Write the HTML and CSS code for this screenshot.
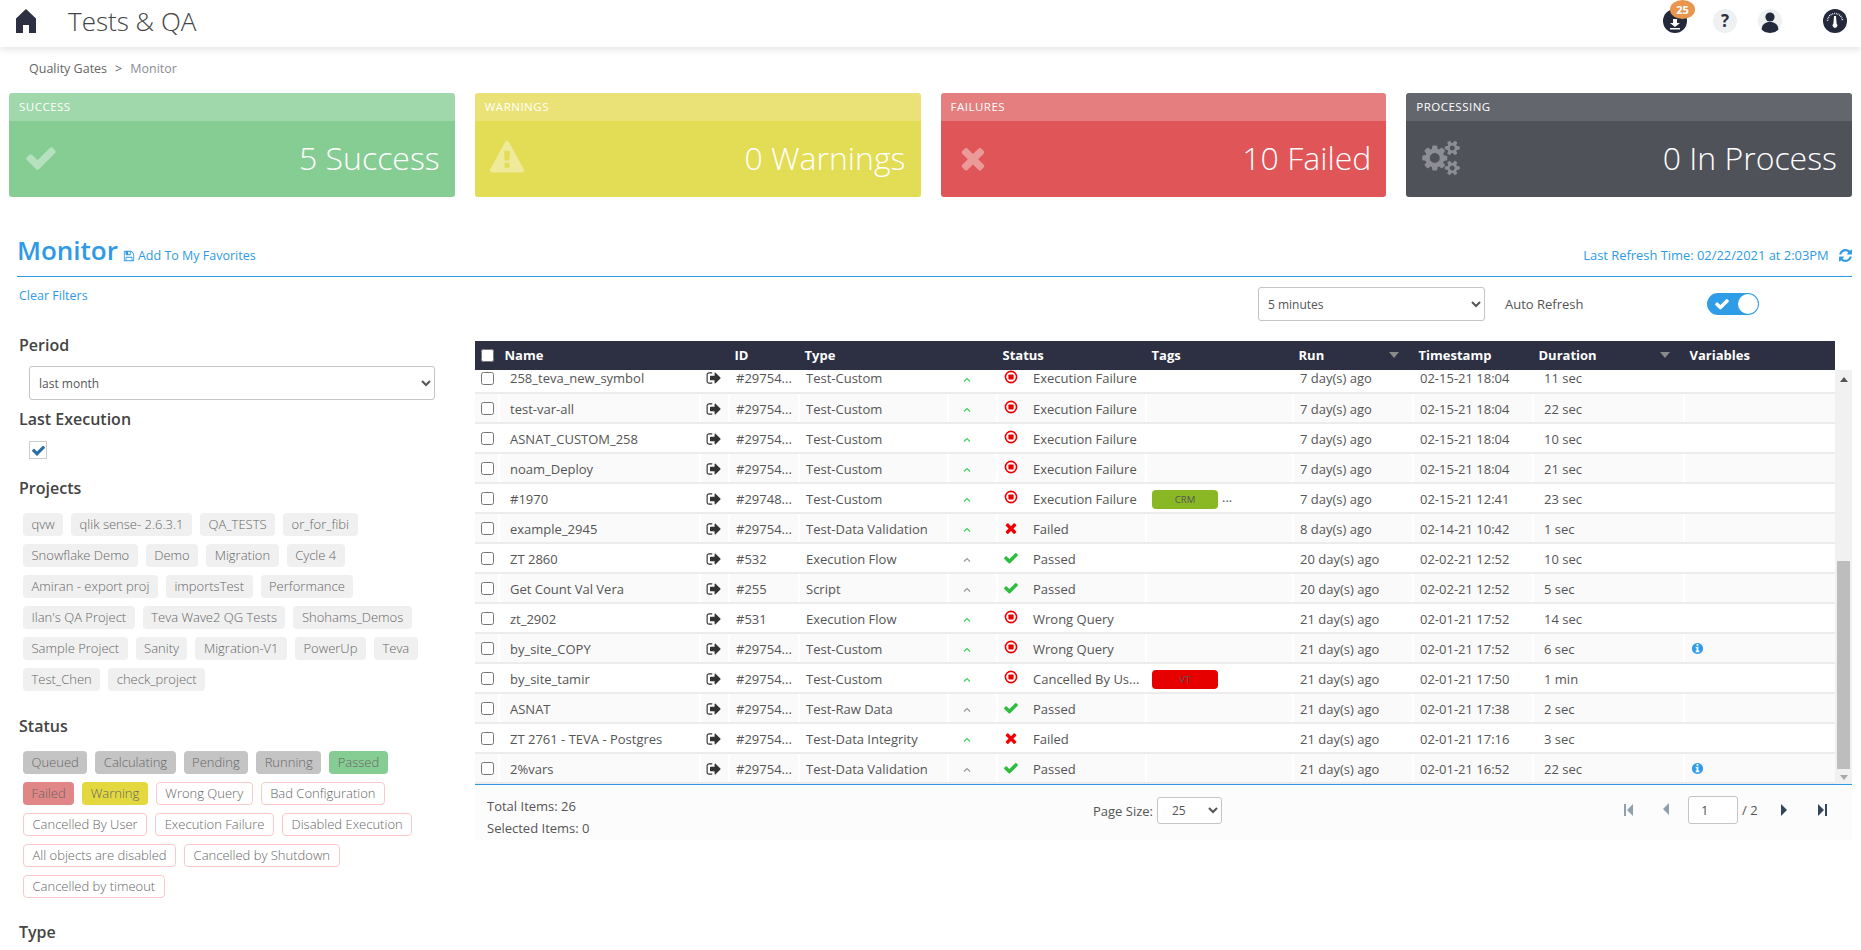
FILE: index.html
```html
<!DOCTYPE html>
<html lang="en">
<head>
    <meta charset="UTF-8">
    <title>Tests &amp; QA</title>
    <link rel="stylesheet" href="styles.css">
</head>
<body>
    <svg class="icon-defs" xmlns="http://www.w3.org/2000/svg">
        <symbol id="i-check" viewBox="0 0 1792 1792"><path d="M1671 566q0 40-28 68l-724 724-136 136q-28 28-68 28t-68-28l-136-136-362-362q-28-28-28-68t28-68l136-136q28-28 68-28t68 28l294 295 656-657q28-28 68-28t68 28l136 136q28 28 28 68z"/></symbol>
        <symbol id="i-times" viewBox="0 0 1792 1792"><path d="M1490 1322q0 40-28 68l-136 136q-28 28-68 28t-68-28l-294-294-294 294q-28 28-68 28t-68-28l-136-136q-28-28-28-68t28-68l294-294-294-294q-28-28-28-68t28-68l136-136q28-28 68-28t68 28l294 294 294-294q28-28 68-28t68 28l136 136q28 28 28 68t-28 68l-294 294 294 294q28 28 28 68z"/></symbol>
        <symbol id="i-warn" viewBox="0 0 1792 1792"><path d="M1024 1375v-190q0-14-9.5-23.5t-22.5-9.5h-192q-13 0-22.5 9.5t-9.5 23.5v190q0 14 9.5 23.5t22.5 9.5h192q13 0 22.5-9.5t9.5-23.5zm-2-374l18-459q0-12-10-19-13-11-24-11h-220q-11 0-24 11-10 7-10 21l17 457q0 10 10 16.5t24 6.5h185q14 0 23.5-6.5t10.5-16.5zm-14-934l768 1408q35 63-2 126-17 29-46.5 46t-63.5 17h-1536q-34 0-63.5-17t-46.5-46q-37-63-2-126l768-1408q17-31 47-49t65-18 65 18 47 49z"/></symbol>
        <symbol id="i-cogs" viewBox="0 0 2048 1792"><path d="M960 896q0-106-75-181t-181-75-181 75-75 181 75 181 181 75 181-75 75-181zm768 512q0-52-38-90t-90-38-90 38-38 90q0 53 37.5 90.5t90.5 37.5 90.5-37.5 37.5-90.5zm0-1024q0-52-38-90t-90-38-90 38-38 90q0 53 37.5 90.5t90.5 37.5 90.5-37.5 37.5-90.5zm-384 421v185q0 10-7 19.5t-16 10.5l-155 24q-11 35-32 76 34 48 90 115 7 11 7 20 0 12-7 19-23 30-82.5 89.5t-78.5 59.5q-11 0-21-7l-115-90q-37 19-77 31-11 108-23 155-7 24-30 24h-186q-11 0-20-7.5t-10-17.5l-23-153q-34-10-75-31l-118 89q-7 7-20 7-11 0-21-8-144-133-144-160 0-9 7-19 10-14 41-53t47-61q-23-44-35-82l-152-24q-10-1-17-9.5t-7-19.5v-185q0-10 7-19.5t16-10.5l155-24q11-35 32-76-34-48-90-115-7-11-7-20 0-12 7-20 22-30 82-89t79-59q11 0 21 7l115 90q34-18 77-32 11-108 23-154 7-24 30-24h186q11 0 20 7.5t10 17.5l23 153q34 10 75 31l118-89q8-7 20-7 11 0 21 8 144 133 144 160 0 8-7 19-12 16-42 54t-45 60q23 48 34 82l152 23q10 2 17 10.5t7 19.5zm640 533v140q0 16-149 31-12 27-30 52 51 113 51 138 0 4-4 7-122 71-124 71-8 0-46-47t-52-68q-20 2-30 2t-30-2q-14 21-52 68t-46 47q-2 0-124-71-4-3-4-7 0-25 51-138-18-25-30-52-149-15-149-31v-140q0-16 149-31 13-29 30-52-51-113-51-138 0-4 4-7 4-2 35-20t59-34 30-16q8 0 46 46.5t52 67.5q20-2 30-2t30 2q51-71 92-112l6-2q4 0 124 70 4 3 4 7 0 25-51 138 17 23 30 52 149 15 149 31zm0-1024v140q0 16-149 31-12 27-30 52 51 113 51 138 0 4-4 7-122 71-124 71-8 0-46-47t-52-68q-20 2-30 2t-30-2q-14 21-52 68t-46 47q-2 0-124-71-4-3-4-7 0-25 51-138-18-25-30-52-149-15-149-31v-140q0-16 149-31 13-29 30-52-51-113-51-138 0-4 4-7 4-2 35-20t59-34 30-16q8 0 46 46.5t52 67.5q20-2 30-2t30 2q51-71 92-112l6-2q4 0 124 70 4 3 4 7 0 25-51 138 17 23 30 52 149 15 149 31z"/></symbol>
        <symbol id="i-info" viewBox="0 0 1792 1792"><path d="M1152 1376v-160q0-14-9-23t-23-9h-96v-512q0-14-9-23t-23-9h-320q-14 0-23 9t-9 23v160q0 14 9 23t23 9h96v320h-96q-14 0-23 9t-9 23v160q0 14 9 23t23 9h448q14 0 23-9t9-23zm-128-896v-160q0-14-9-23t-23-9h-192q-14 0-23 9t-9 23v160q0 14 9 23t23 9h192q14 0 23-9t9-23zm640 416q0 209-103 385.5t-279.5 279.5-385.5 103-385.5-103-279.5-279.5-103-385.5 103-385.5 279.5-279.5 385.5-103 385.5 103 279.5 279.5 103 385.5z"/></symbol>
        <symbol id="i-exit" viewBox="0 0 1792 1792"><path d="M704 1440q0 4 1 20t.5 26.5-3 23.5-10 19.5-20.5 6.5h-320q-119 0-203.5-84.5t-84.5-203.5v-704q0-119 84.5-203.5t203.5-84.5h320q13 0 22.5 9.5t9.5 22.5q0 4 1 20t.5 26.5-3 23.5-10 19.5-20.5 6.5h-320q-66 0-113 47t-47 113v704q0 66 47 113t113 47h312l11.5 1 11.5 3 8 5.5 7 9 2 13.5zm928-544q0 26-19 45l-544 544q-19 19-45 19t-45-19-19-45v-288h-448q-26 0-45-19t-19-45v-384q0-26 19-45t45-19h448v-288q0-26 19-45t45-19 45 19l544 544q19 19 19 45z"/></symbol>
        <symbol id="i-refresh" viewBox="0 0 1792 1792"><path d="M1639 1056q0 5-1 7-64 268-268 434.5t-478 166.5q-146 0-282.5-55t-243.5-157l-129 129q-19 19-45 19t-45-19-19-45v-448q0-26 19-45t45-19h448q26 0 45 19t19 45-19 45l-137 137q71 66 161 102t187 36q134 0 250-65t186-179q11-17 53-117 8-23 30-23h192q13 0 22.5 9.5t9.5 22.5zm25-800v448q0 26-19 45t-45 19h-448q-26 0-45-19t-19-45 19-45l138-138q-148-137-349-137-134 0-250 65t-186 179q-11 17-53 117-8 23-30 23h-199q-13 0-22.5-9.5t-9.5-22.5v-7q65-268 270-434.5t480-166.5q146 0 284 55.5t245 156.5l130-129q19-19 45-19t45 19 19 45z"/></symbol>
        <symbol id="i-save" viewBox="0 0 1792 1792"><path d="M512 1536h768v-384h-768v384zm896 0h128v-896q0-14-10-38.5t-20-34.5l-281-281q-10-10-34-20t-39-10v416q0 40-28 68t-68 28h-576q-40 0-68-28t-28-68v-416h-128v1280h128v-416q0-40 28-68t68-28h832q40 0 68 28t28 68v416zm-384-928v-320q0-13-9.5-22.5t-22.5-9.5h-192q-13 0-22.5 9.5t-9.5 22.5v320q0 13 9.5 22.5t22.5 9.5h192q13 0 22.5-9.5t9.5-22.5zm640 32v928q0 40-28 68t-68 28h-1344q-40 0-68-28t-28-68v-1344q0-40 28-68t68-28h928q40 0 88 20t76 48l280 280q28 28 48 76t20 88z"/></symbol>
        <symbol id="i-stop" viewBox="0 0 14 14"><circle cx="7" cy="7" r="5.6" fill="none" stroke="currentColor" stroke-width="1.6"/><rect x="4.4" y="4.4" width="5.2" height="5.2" rx="0.8"/></symbol>
        <symbol id="i-caret" viewBox="0 0 8 6"><path d="M1 4.5 L4 1.5 L7 4.5" fill="none" stroke="currentColor" stroke-width="1.2"/></symbol>
    </svg>

    <header class="topbar">
        <svg class="home-icon" viewBox="0 0 20 24"><path d="M10 0 L20 9.5 V24 H13 V16 H7 V24 H0 V9.5 Z"/></svg>
        <h1 class="app-title">Tests &amp; QA</h1>
        <div class="top-icons">
            <div class="top-icon dark download">
                <svg viewBox="0 0 24 24"><path d="M10 10 H14 V14 H17 L12 18 L7 14 H10 Z M7 19 H17 V20.5 H7 Z" fill="#fff"/></svg>
                <span class="badge">25</span>
            </div>
            <div class="top-icon light help">?</div>
            <div class="top-icon light user">
                <svg viewBox="0 0 24 24"><circle cx="12" cy="8" r="4.6"/><path d="M3.5 22 C3.5 15.5 7 13 12 13 C17 13 20.5 15.5 20.5 22 C17 24.5 7 24.5 3.5 22 Z"/></svg>
            </div>
            <div class="top-icon dark gauge">
                <svg viewBox="0 0 24 24"><path d="M4.5 12 A7.5 7.5 0 0 1 19.5 12" fill="none" stroke="#fff" stroke-width="1.6" stroke-dasharray="0.8 1"/><path d="M11 7 H13 L13.6 14.5 A2.4 2.4 0 1 1 10.4 14.5 Z" fill="#fff"/></svg>
            </div>
        </div>
    </header>

    <nav class="breadcrumb">
        <span>Quality Gates</span>
        <span class="crumb-sep">&gt;</span>
        <span class="crumb-current">Monitor</span>
    </nav>

    <section class="cards">
        <div class="card success">
            <div class="card-head">SUCCESS</div>
            <div class="card-body">
                <svg class="card-icon"><use href="#i-check"/></svg>
                <span class="card-value">5 Success</span>
            </div>
        </div>
        <div class="card warnings">
            <div class="card-head">WARNINGS</div>
            <div class="card-body">
                <svg class="card-icon"><use href="#i-warn"/></svg>
                <span class="card-value">0 Warnings</span>
            </div>
        </div>
        <div class="card failures">
            <div class="card-head">FAILURES</div>
            <div class="card-body">
                <svg class="card-icon"><use href="#i-times"/></svg>
                <span class="card-value">10 Failed</span>
            </div>
        </div>
        <div class="card processing">
            <div class="card-head">PROCESSING</div>
            <div class="card-body">
                <svg class="card-icon cogs"><use href="#i-cogs"/></svg>
                <span class="card-value">0 In Process</span>
            </div>
        </div>
    </section>

    <div class="page-title">
        <h2>Monitor</h2>
        <a class="favorites"><svg><use href="#i-save"/></svg>Add To My Favorites</a>
        <div class="last-refresh">
            Last Refresh Time: 02/22/2021 at 2:03PM
            <svg><use href="#i-refresh"/></svg>
        </div>
    </div>

    <div class="content">
        <aside class="filters">
            <a class="clear-filters">Clear Filters</a>

            <h3 class="filter-title period-title">Period</h3>
            <select class="select period-select">
                <option>last month</option>
            </select>

            <h3 class="filter-title">Last Execution</h3>
            <div class="fake-check">
                <svg viewBox="0 0 1792 1792"><use href="#i-check"/></svg>
            </div>

            <h3 class="filter-title projects-title">Projects</h3>
            <div class="chips">
                <span class="chip">qvw</span>
                <span class="chip">qlik sense- 2.6.3.1</span>
                <span class="chip">QA_TESTS</span>
                <span class="chip">or_for_fibi</span>
                <span class="chip">Snowflake Demo</span>
                <span class="chip">Demo</span>
                <span class="chip">Migration</span>
                <span class="chip">Cycle 4</span>
                <span class="chip">Amiran - export proj</span>
                <span class="chip">importsTest</span>
                <span class="chip">Performance</span>
                <span class="chip">Ilan's QA Project</span>
                <span class="chip">Teva Wave2 QG Tests</span>
                <span class="chip">Shohams_Demos</span>
                <span class="chip">Sample Project</span>
                <span class="chip">Sanity</span>
                <span class="chip">Migration-V1</span>
                <span class="chip">PowerUp</span>
                <span class="chip">Teva</span>
                <span class="chip">Test_Chen</span>
                <span class="chip">check_project</span>
            </div>

            <h3 class="filter-title status-title">Status</h3>
            <div class="chips">
                <span class="chip grey">Queued</span>
                <span class="chip grey">Calculating</span>
                <span class="chip grey">Pending</span>
                <span class="chip grey">Running</span>
                <span class="chip green">Passed</span>
                <span class="chip red">Failed</span>
                <span class="chip yellow">Warning</span>
                <span class="chip outline">Wrong Query</span>
                <span class="chip outline">Bad Configuration</span>
                <span class="chip outline">Cancelled By User</span>
                <span class="chip outline">Execution Failure</span>
                <span class="chip outline">Disabled Execution</span>
                <span class="chip outline">All objects are disabled</span>
                <span class="chip outline">Cancelled by Shutdown</span>
                <span class="chip outline">Cancelled by timeout</span>
            </div>

            <h3 class="filter-title type-title">Type</h3>
        </aside>

        <main class="results">
            <div class="refresh-bar">
                <select class="select refresh-select">
                    <option>5 minutes</option>
                </select>
                <span class="refresh-label">Auto Refresh</span>
                <div class="toggle">
                    <svg><use href="#i-check"/></svg>
                    <span class="knob"></span>
                </div>
            </div>

            <div class="grid-head-wrap">
                <table class="grid">
                    <colgroup>
                        <col class="c-check"><col class="c-name"><col class="c-go"><col class="c-id"><col class="c-type"><col class="c-trend"><col class="c-status"><col class="c-tags"><col class="c-run"><col class="c-time"><col class="c-dur"><col class="c-vars">
                    </colgroup>
                    <thead>
                        <tr>
                            <th class="check-cell"><input type="checkbox"></th>
                            <th colspan="2">Name</th>
                            <th>ID</th>
                            <th colspan="2">Type</th>
                            <th>Status</th>
                            <th>Tags</th>
                            <th><div class="sort-head">Run<i class="sort-arrow"></i></div></th>
                            <th>Timestamp</th>
                            <th><div class="sort-head">Duration<i class="sort-arrow"></i></div></th>
                            <th>Variables</th>
                        </tr>
                    </thead>
                </table>
            </div>

            <div class="grid-body-wrap">
                <div class="grid-scroll">
                    <table class="grid body-grid">
                        <colgroup>
                            <col class="c-check"><col class="c-name"><col class="c-go"><col class="c-id"><col class="c-type"><col class="c-trend"><col class="c-status"><col class="c-tags"><col class="c-run"><col class="c-time"><col class="c-dur"><col class="c-vars">
                        </colgroup>
                        <tbody>
                            <tr><td class="check-cell"><input type="checkbox"></td><td class="name">258_teva_new_symbol</td><td><svg class="go"><use href="#i-exit"/></svg></td><td>#29754...</td><td>Test-Custom</td><td><svg class="trend up"><use href="#i-caret"/></svg></td><td><div class="status"><svg class="st stop"><use href="#i-stop"/></svg><span>Execution Failure</span></div></td><td></td><td>7 day(s) ago</td><td>02-15-21 18:04</td><td class="dur">11 sec</td><td></td></tr>
                            <tr><td class="check-cell"><input type="checkbox"></td><td class="name">test-var-all</td><td><svg class="go"><use href="#i-exit"/></svg></td><td>#29754...</td><td>Test-Custom</td><td><svg class="trend up"><use href="#i-caret"/></svg></td><td><div class="status"><svg class="st stop"><use href="#i-stop"/></svg><span>Execution Failure</span></div></td><td></td><td>7 day(s) ago</td><td>02-15-21 18:04</td><td class="dur">22 sec</td><td></td></tr>
                            <tr><td class="check-cell"><input type="checkbox"></td><td class="name">ASNAT_CUSTOM_258</td><td><svg class="go"><use href="#i-exit"/></svg></td><td>#29754...</td><td>Test-Custom</td><td><svg class="trend up"><use href="#i-caret"/></svg></td><td><div class="status"><svg class="st stop"><use href="#i-stop"/></svg><span>Execution Failure</span></div></td><td></td><td>7 day(s) ago</td><td>02-15-21 18:04</td><td class="dur">10 sec</td><td></td></tr>
                            <tr><td class="check-cell"><input type="checkbox"></td><td class="name">noam_Deploy</td><td><svg class="go"><use href="#i-exit"/></svg></td><td>#29754...</td><td>Test-Custom</td><td><svg class="trend up"><use href="#i-caret"/></svg></td><td><div class="status"><svg class="st stop"><use href="#i-stop"/></svg><span>Execution Failure</span></div></td><td></td><td>7 day(s) ago</td><td>02-15-21 18:04</td><td class="dur">21 sec</td><td></td></tr>
                            <tr><td class="check-cell"><input type="checkbox"></td><td class="name">#1970</td><td><svg class="go"><use href="#i-exit"/></svg></td><td>#29748...</td><td>Test-Custom</td><td><svg class="trend up"><use href="#i-caret"/></svg></td><td><div class="status"><svg class="st stop"><use href="#i-stop"/></svg><span>Execution Failure</span></div></td><td class="tags"><span class="tag crm">CRM</span><span class="more">...</span></td><td>7 day(s) ago</td><td>02-15-21 12:41</td><td class="dur">23 sec</td><td></td></tr>
                            <tr><td class="check-cell"><input type="checkbox"></td><td class="name">example_2945</td><td><svg class="go"><use href="#i-exit"/></svg></td><td>#29754...</td><td>Test-Data Validation</td><td><svg class="trend up"><use href="#i-caret"/></svg></td><td><div class="status"><svg class="st fail"><use href="#i-times"/></svg><span>Failed</span></div></td><td></td><td>8 day(s) ago</td><td>02-14-21 10:42</td><td class="dur">1 sec</td><td></td></tr>
                            <tr><td class="check-cell"><input type="checkbox"></td><td class="name">ZT 2860</td><td><svg class="go"><use href="#i-exit"/></svg></td><td>#532</td><td>Execution Flow</td><td><svg class="trend"><use href="#i-caret"/></svg></td><td><div class="status"><svg class="st pass"><use href="#i-check"/></svg><span>Passed</span></div></td><td></td><td>20 day(s) ago</td><td>02-02-21 12:52</td><td class="dur">10 sec</td><td></td></tr>
                            <tr><td class="check-cell"><input type="checkbox"></td><td class="name">Get Count Val Vera</td><td><svg class="go"><use href="#i-exit"/></svg></td><td>#255</td><td>Script</td><td><svg class="trend"><use href="#i-caret"/></svg></td><td><div class="status"><svg class="st pass"><use href="#i-check"/></svg><span>Passed</span></div></td><td></td><td>20 day(s) ago</td><td>02-02-21 12:52</td><td class="dur">5 sec</td><td></td></tr>
                            <tr><td class="check-cell"><input type="checkbox"></td><td class="name">zt_2902</td><td><svg class="go"><use href="#i-exit"/></svg></td><td>#531</td><td>Execution Flow</td><td><svg class="trend up"><use href="#i-caret"/></svg></td><td><div class="status"><svg class="st stop"><use href="#i-stop"/></svg><span>Wrong Query</span></div></td><td></td><td>21 day(s) ago</td><td>02-01-21 17:52</td><td class="dur">14 sec</td><td></td></tr>
                            <tr><td class="check-cell"><input type="checkbox"></td><td class="name">by_site_COPY</td><td><svg class="go"><use href="#i-exit"/></svg></td><td>#29754...</td><td>Test-Custom</td><td><svg class="trend up"><use href="#i-caret"/></svg></td><td><div class="status"><svg class="st stop"><use href="#i-stop"/></svg><span>Wrong Query</span></div></td><td></td><td>21 day(s) ago</td><td>02-01-21 17:52</td><td class="dur">6 sec</td><td><svg class="var-info"><use href="#i-info"/></svg></td></tr>
                            <tr><td class="check-cell"><input type="checkbox"></td><td class="name">by_site_tamir</td><td><svg class="go"><use href="#i-exit"/></svg></td><td>#29754...</td><td>Test-Custom</td><td><svg class="trend up"><use href="#i-caret"/></svg></td><td><div class="status"><svg class="st stop"><use href="#i-stop"/></svg><span>Cancelled By Us...</span></div></td><td class="tags"><span class="tag vt">VT</span></td><td>21 day(s) ago</td><td>02-01-21 17:50</td><td class="dur">1 min</td><td></td></tr>
                            <tr><td class="check-cell"><input type="checkbox"></td><td class="name">ASNAT</td><td><svg class="go"><use href="#i-exit"/></svg></td><td>#29754...</td><td>Test-Raw Data</td><td><svg class="trend"><use href="#i-caret"/></svg></td><td><div class="status"><svg class="st pass"><use href="#i-check"/></svg><span>Passed</span></div></td><td></td><td>21 day(s) ago</td><td>02-01-21 17:38</td><td class="dur">2 sec</td><td></td></tr>
                            <tr><td class="check-cell"><input type="checkbox"></td><td class="name">ZT 2761 - TEVA - Postgres</td><td><svg class="go"><use href="#i-exit"/></svg></td><td>#29754...</td><td>Test-Data Integrity</td><td><svg class="trend up"><use href="#i-caret"/></svg></td><td><div class="status"><svg class="st fail"><use href="#i-times"/></svg><span>Failed</span></div></td><td></td><td>21 day(s) ago</td><td>02-01-21 17:16</td><td class="dur">3 sec</td><td></td></tr>
                            <tr><td class="check-cell"><input type="checkbox"></td><td class="name">2%vars</td><td><svg class="go"><use href="#i-exit"/></svg></td><td>#29754...</td><td>Test-Data Validation</td><td><svg class="trend"><use href="#i-caret"/></svg></td><td><div class="status"><svg class="st pass"><use href="#i-check"/></svg><span>Passed</span></div></td><td></td><td>21 day(s) ago</td><td>02-01-21 16:52</td><td class="dur">22 sec</td><td><svg class="var-info"><use href="#i-info"/></svg></td></tr>
                        </tbody>
                    </table>
                </div>
                <div class="scrollbar">
                    <i class="sb-up"></i>
                    <div class="sb-thumb"></div>
                    <i class="sb-down"></i>
                </div>
            </div>

            <footer class="grid-footer">
                <div class="footer-info">
                    <div>Total Items: 26</div>
                    <div>Selected Items: 0</div>
                </div>
                <div class="page-size">
                    <span>Page Size:</span>
                    <select class="select size-select"><option>25</option></select>
                </div>
                <div class="pager">
                    <svg class="pg-first" viewBox="0 0 9 12"><path d="M0 0 H2 V12 H0 Z M9 0 V12 L3 6 Z"/></svg>
                    <svg class="pg-prev" viewBox="0 0 6 12"><path d="M6 0 V12 L0 6 Z"/></svg>
                    <input class="page-input" type="text" value="1">
                    <span class="page-total">/ 2</span>
                    <svg class="pg-next" viewBox="0 0 6 12"><path d="M0 0 V12 L6 6 Z"/></svg>
                    <svg class="pg-last" viewBox="0 0 9 12"><path d="M0 0 L6 6 L0 12 Z M7 0 H9 V12 H7 Z"/></svg>
                </div>
            </footer>
        </main>
    </div>
</body>
</html>
```

FILE: styles.css
```css
* {
    box-sizing: border-box;
}

html, body {
    height: 100%;
    margin: 0;
    overflow: hidden;
}

body {
    background: #fff;
    color: #555;
    font-family: 'Open Sans', sans-serif;
    font-size: 13px;
}

.icon-defs {
    display: none;
}

/* top bar */
.topbar {
    display: flex;
    align-items: center;
    height: 47px;
    padding: 0 14px 5px 16px;
    background: #fff;
    box-shadow: 0 2px 8px rgba(0,0,0,0.12);
}

.home-icon {
    width: 20px;
    height: 24px;
    fill: #2d3042;
}

.app-title {
    margin: -1px 0 0 32px;
    font-size: 26px;
    font-weight: 300;
    color: #444;
}

.top-icons {
    display: flex;
    margin-left: auto;
}

.top-icon {
    position: relative;
    width: 24px;
    height: 24px;
    border-radius: 50%;
}

.top-icon svg {
    display: block;
    width: 24px;
    height: 24px;
}

.top-icon.dark {
    background: #23283a;
}

.top-icon.light {
    background: #eef0f2;
}

.help {
    margin-left: 26px;
    text-align: center;
    font-size: 17px;
    font-weight: 700;
    line-height: 24px;
    color: #2d3042;
}

.user {
    margin-left: 21px;
    fill: #23283a;
    overflow: hidden;
}

.gauge {
    margin-left: 41px;
}

.badge {
    position: absolute;
    top: -9px;
    left: 7px;
    width: 25px;
    height: 19px;
    border-radius: 50%;
    background: #e8964e;
    color: #fff;
    font-size: 11px;
    font-weight: 700;
    line-height: 19px;
    text-align: center;
}

/* breadcrumb */
.breadcrumb {
    display: flex;
    align-items: center;
    gap: 8px;
    height: 42px;
    margin-bottom: 4px;
    padding-left: 29px;
    font-size: 12.5px;
    color: #666;
}

.crumb-current {
    color: #8a8d96;
}

/* summary cards */
.cards {
    display: flex;
    gap: 20px;
    padding: 0 9px;
}

.card {
    flex: 1;
    height: 104px;
    border-radius: 3px;
    overflow: hidden;
    color: #fff;
}

.card-head {
    height: 28px;
    padding-left: 10px;
    font-size: 11.5px;
    line-height: 28px;
    letter-spacing: 0.5px;
}

.card-body {
    display: flex;
    align-items: center;
    justify-content: space-between;
    height: 76px;
    padding: 0 15px 3px 15px;
}

.card-icon {
    width: 34px;
    height: 34px;
    fill: rgba(255,255,255,0.4);
}

.card-icon.cogs {
    width: 40px;
    height: 36px;
    fill: rgba(255,255,255,0.35);
}

.card-value {
    font-size: 32px;
    font-weight: 300;
}

.success .card-head { background: #a0d8ab; }
.success .card-body { background: #86cd94; }
.warnings .card-head { background: #eae276; }
.warnings .card-body { background: #e3dc55; }
.failures .card-head { background: #e57e7e; }
.failures .card-body { background: #e05558; }
.processing .card-head { background: #63666d; }
.processing .card-body { background: #4f5259; }

/* page title */
.page-title {
    display: flex;
    align-items: baseline;
    height: 80px;
    margin: 0 9px 0 17px;
    padding-top: 35px;
    border-bottom: 1px solid #2e9ae6;
    color: #2e9ae6;
}

.page-title h2 {
    margin: 0;
    font-size: 26px;
    font-weight: 600;
    line-height: 36px;
}

.favorites {
    margin-left: 5px;
    font-size: 12.5px;
}

.favorites svg {
    width: 12px;
    height: 12px;
    margin-right: 3px;
    fill: #2e9ae6;
    vertical-align: -2px;
}

.last-refresh {
    margin-left: auto;
    font-size: 12.9px;
}

.last-refresh svg {
    width: 15px;
    height: 15px;
    margin: 0 -1px 0 6px;
    fill: #2e9ae6;
    vertical-align: -3px;
}

/* layout below the title */
.content {
    display: flex;
}

.filters {
    flex: 0 0 475px;
    padding: 11px 40px 0 19px;
}

.clear-filters {
    display: block;
    font-size: 12.5px;
    line-height: 16px;
    color: #2e9ae6;
}

.filter-title {
    margin: 0;
    font-size: 16px;
    font-weight: 600;
    line-height: 22px;
    color: #444;
}

.period-title {
    margin-top: 30px;
}

.projects-title {
    margin-top: 18px;
}

.status-title {
    margin-top: 24px;
}

.type-title {
    margin-top: 23px;
}

.select {
    height: 34px;
    padding-left: 5px;
    border: 1px solid #c4c4c4;
    border-radius: 3px;
    background: #fff;
    color: #555;
    font-family: 'Open Sans', sans-serif;
    font-size: 12px;
}

.period-select {
    display: block;
    width: 406px;
    margin: 10px 0 8px 10px;
}

.fake-check {
    display: flex;
    align-items: center;
    justify-content: center;
    width: 18px;
    height: 18px;
    margin: 11px 0 0 10px;
    border: 1px solid #ccc;
    fill: #2a6fa5;
}

.fake-check svg {
    width: 15px;
    height: 15px;
}

.chips {
    display: flex;
    flex-wrap: wrap;
    gap: 8px;
    margin: 14px 0 0 4px;
}

.chip {
    height: 23px;
    padding: 0 8.5px;
    border-radius: 4px;
    background: #f0f0f0;
    color: #666;
    font-size: 13px;
    font-weight: 300;
    line-height: 22px;
}

.chip.grey { background: #c4c4c4; }
.chip.green { background: #86cd94; }
.chip.red { background: #e08686; }
.chip.yellow { background: #e3d93f; }

.chip.outline {
    border: 1px solid #fbc9c9;
    background: #fff;
    line-height: 20px;
}

/* results */
.results {
    flex: 1;
    padding: 10px 9px 0 0;
}

.refresh-bar {
    display: flex;
    align-items: center;
    height: 34px;
    margin-bottom: 20px;
    padding-right: 93px;
}

.refresh-select {
    width: 227px;
    margin-left: auto;
}

.refresh-label {
    width: 202px;
    margin-left: 20px;
    font-size: 13px;
}

.toggle {
    display: flex;
    align-items: center;
    justify-content: space-between;
    width: 52px;
    height: 22px;
    padding: 0 1px 0 7px;
    border-radius: 11px;
    background: #2f9ce8;
}

.toggle svg {
    width: 16px;
    height: 16px;
    fill: #fff;
}

.knob {
    width: 20px;
    height: 20px;
    border-radius: 50%;
    background: #fff;
}

/* grid */
.grid-head-wrap {
    width: 1360px;
}

.grid {
    width: 1360px;
    border-collapse: collapse;
    table-layout: fixed;
}

.c-check { width: 24px; }
.c-name { width: 201px; }
.c-go { width: 29px; }
.c-id { width: 70px; }
.c-type { width: 149px; }
.c-trend { width: 49px; }
.c-status { width: 149px; }
.c-tags { width: 147px; }
.c-run { width: 120px; }
.c-time { width: 120px; }
.c-dur { width: 151px; }
.c-vars { width: 151px; }

.grid th {
    height: 29px;
    padding: 0 6px 1px 5.5px;
    background: #2d2f42;
    color: #fff;
    font-size: 13px;
    font-weight: 700;
    text-align: left;
}

.check-cell input {
    display: block;
    margin: 0;
}

.grid th.check-cell {
    padding-left: 6px;
}

.sort-head {
    display: flex;
    align-items: center;
    justify-content: space-between;
    padding-right: 8px;
}

.sort-arrow {
    border-left: 5px solid transparent;
    border-right: 5px solid transparent;
    border-top: 6px solid #8a8a8a;
}

.grid-body-wrap {
    display: flex;
    height: 414px;
}

.grid-scroll {
    flex: 0 0 1360px;
    overflow: hidden;
}

.body-grid {
    margin-top: -7px;
}

.grid td {
    height: 30px;
    padding: 1px 6px 0;
    border-left: 2px solid #fff;
    border-bottom: 2px solid #ececec;
    white-space: nowrap;
    font-size: 13px;
}

.grid tr:nth-child(even) td {
    background: #fafafa;
}

.grid td:first-child {
    border-left: 0;
}

.grid td.name {
    padding-left: 10px;
}

.grid td.dur {
    padding-left: 10px;
}

.go {
    display: block;
    width: 16px;
    height: 16px;
    margin-left: -1px;
    fill: #333;
}

.trend {
    display: block;
    width: 8px;
    height: 6px;
    margin: 3px 0 0 8px;
    color: #9a9a9a;
}

.trend.up {
    color: #3fcf5c;
}

.status {
    display: flex;
    align-items: center;
}

.st {
    flex: none;
    width: 14px;
    height: 14px;
    margin-right: 15px;
}

.st.stop {
    margin-top: -3px;
    color: #ef0000;
    fill: #ef0000;
}

.st.fail,
.st.pass {
    width: 16px;
    height: 16px;
    margin: -1px 14px 0 -1px;
}

.st.fail {
    fill: #ef0000;
}

.st.pass {
    fill: #2ebd3d;
}

.tag {
    display: inline-block;
    width: 66px;
    height: 19px;
    border-radius: 4px;
    color: #555;
    font-size: 9.5px;
    line-height: 19px;
    text-align: center;
    vertical-align: middle;
}

.grid td.tags {
    padding-left: 5px;
}

.tag.crm {
    background: #8ab824;
}

.tag.vt {
    background: #e60000;
}

.more {
    margin-left: 4px;
}

.var-info {
    display: block;
    width: 13px;
    height: 13px;
    fill: #2f9ce8;
}

.scrollbar {
    display: flex;
    flex: 0 0 17px;
    flex-direction: column;
    align-items: center;
    background: #f1f1f1;
}

.sb-up {
    margin: 7px 0 179px;
    border-left: 4px solid transparent;
    border-right: 4px solid transparent;
    border-bottom: 5px solid #555;
}

.sb-thumb {
    flex: none;
    width: 13px;
    height: 208px;
    background: #bdbdbd;
}

.sb-down {
    margin-top: 6px;
    border-left: 4px solid transparent;
    border-right: 4px solid transparent;
    border-top: 5px solid #a8a8a8;
}

.grid-footer {
    display: flex;
    height: 56px;
    padding-top: 12px;
    border-top: 1px solid #2e9ae6;
    background: #fcfcfc;
    font-size: 13px;
}

.footer-info {
    flex: 0 0 618px;
    margin-top: -12px;
    padding: 10px 0 0 12px;
    line-height: 22px;
}

.page-size {
    display: flex;
    align-items: center;
    gap: 4px;
    height: 27px;
}

.size-select {
    width: 65px;
    height: 27px;
    padding-left: 10px;
}

.pager {
    display: flex;
    align-items: center;
    height: 28px;
    margin: -1px 0 0 auto;
    padding-right: 25px;
}

.pg-first, .pg-last {
    width: 9px;
    height: 12px;
}

.pg-prev, .pg-next {
    width: 6px;
    height: 12px;
}

.pg-first, .pg-prev {
    fill: #8fa0ac;
}

.pg-next, .pg-last {
    fill: #34465c;
}

.pg-prev {
    margin: -2px 0 0 30px;
}

.page-input {
    width: 50px;
    height: 28px;
    margin-left: 19px;
    padding-left: 12px;
    border: 1px solid #c4c4c4;
    border-radius: 3px;
    color: #555;
    font-family: 'Open Sans', sans-serif;
    font-size: 13px;
}

.page-total {
    width: 39px;
    margin-left: 4px;
}

.pg-last {
    margin-left: 31px;
}
```
